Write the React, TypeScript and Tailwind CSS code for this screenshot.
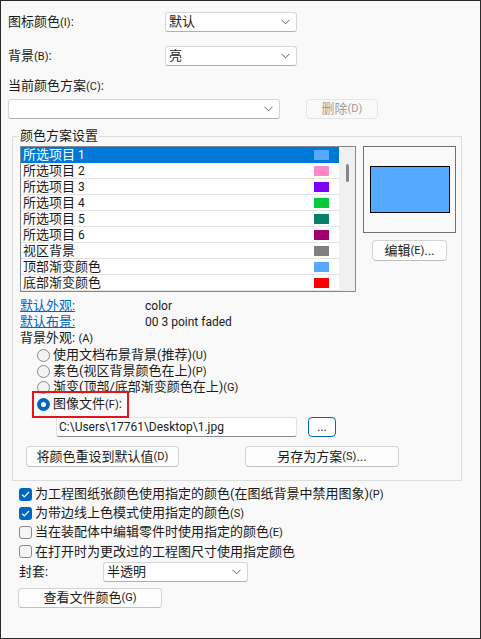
import React from "react";

const items = [
  { name: "所选项目", n: "1", color: "#55aaff" },
  { name: "所选项目", n: "2", color: "#ff88c8" },
  { name: "所选项目", n: "3", color: "#8000ff" },
  { name: "所选项目", n: "4", color: "#00cc3c" },
  { name: "所选项目", n: "5", color: "#0a7f68" },
  { name: "所选项目", n: "6", color: "#a0006e" },
  { name: "视区背景", n: "", color: "#808080" },
  { name: "顶部渐变颜色", n: "", color: "#55aaff" },
  { name: "底部渐变颜色", n: "", color: "#ff0000" },
];

const Key = ({ k }: { k: string }) => <span className="text-[11px]">({k})</span>;

const Chevron = () => (
  <svg width="9" height="6" viewBox="0 0 9 6" className="shrink-0">
    <path d="M0.5 0.8 L4.5 4.8 L8.5 0.8" fill="none" stroke="#5f5f5f" strokeWidth="1" />
  </svg>
);

const Select = ({ value, className }: { value?: string; className: string }) => (
  <div
    className={
      "flex items-center justify-between bg-white border border-[#d6d6d6] border-b-[#b0b0b0] rounded-[3px] pl-[3px] pr-[6px] " +
      className
    }
  >
    <span>{value}</span>
    <Chevron />
  </div>
);

const Button = ({ children, className }: { children: React.ReactNode; className: string }) => (
  <div
    className={
      "flex items-center justify-center bg-[#fdfdfd] border border-[#d3d3d3] border-b-[#c0c0c0] rounded-[4px] " + className
    }
  >
    {children}
  </div>
);

const Radio = ({ checked, children }: { checked?: boolean; children: React.ReactNode }) => (
  <div className="flex items-center h-[16px] pl-[17px]">
    {checked ? (
      <div className="w-[13px] h-[13px] shrink-0 rounded-full bg-[#0067c0] flex items-center justify-center">
        <div className="w-[5px] h-[5px] rounded-full bg-white" />
      </div>
    ) : (
      <div className="w-[13px] h-[13px] shrink-0 rounded-full border border-[#8a8a8a] bg-[#f3f3f3]" />
    )}
    <span className="ml-[3px] whitespace-nowrap">{children}</span>
  </div>
);

const Check = ({ checked, children }: { checked?: boolean; children: React.ReactNode }) => (
  <div className="flex items-center h-[19px] pl-[11px]">
    {checked ? (
      <div className="w-[13px] h-[13px] shrink-0 rounded-[3px] bg-[#0067c0] flex items-center justify-center">
        <svg width="9" height="7" viewBox="0 0 9 7">
          <path d="M1 3.6 L3.3 5.8 L8 1" fill="none" stroke="white" strokeWidth="1.2" />
        </svg>
      </div>
    ) : (
      <div className="w-[13px] h-[13px] shrink-0 rounded-[3px] border border-[#8a8a8a] bg-[#f5f5f5]" />
    )}
    <span className="ml-[3px] whitespace-nowrap">{children}</span>
  </div>
);

export default function App() {
  return (
    <div className="w-[481px] h-[639px] border border-[#2a2a2a] bg-[#f9f9f9] text-[#1a1a1a] text-[13px] leading-[16px] font-['Roboto','Noto_Sans_CJK_SC',sans-serif] flex flex-col pl-[7px] pt-[11px] overflow-hidden">
      {/* top selectors */}
      <div className="flex items-center h-[20px]">
        <span className="w-[157px]">
          图标颜色<Key k="I" />:
        </span>
        <Select value="默认" className="w-[132px] h-[20px]" />
      </div>
      <div className="flex items-center h-[20px] mt-[14px]">
        <span className="w-[157px]">
          背景<Key k="B" />:
        </span>
        <Select value="亮" className="w-[132px] h-[20px]" />
      </div>
      <div className="mt-[12px] h-[16px]">
        当前颜色方案<Key k="C" />:
      </div>
      <div className="flex items-center mt-[5px] h-[20px]">
        <Select className="w-[272px] h-[20px]" />
        <div className="ml-[26px] w-[72px] h-[20px] flex items-center justify-center border border-[#e5e5e5] rounded-[4px] bg-[#f9f9f9] text-[#9d9d9d]">
          删除<Key k="D" />
        </div>
      </div>

      {/* group box */}
      <div className="relative mt-[17px] ml-[4px] w-[450px] h-[345px] shrink-0 border border-[#dcdcdc] pl-[7px] pt-[9px] flex flex-col">
        <span className="absolute left-[6px] top-[-9px] px-[1px] bg-[#f9f9f9]">颜色方案设置</span>

        <div className="flex items-start">
          <div className="w-[336px] h-[146px] border border-[#828790] bg-white flex">
            <div className="w-[318px] flex flex-col">
              {items.map((it, i) => (
                <div
                  key={i}
                  className={
                    "h-[16px] shrink-0 flex items-center justify-between pl-[2px] pr-[10px] border-b " +
                    (i === 0 ? "bg-[#0078d7] text-white border-[#0078d7]" : "border-[#e3e3e3]")
                  }
                >
                  <span>
                    {it.name}
                    {it.n && <span className="text-[12px]"> {it.n}</span>}
                  </span>
                  <div className="w-[15px] h-[10px]" style={{ backgroundColor: it.color }} />
                </div>
              ))}
            </div>
            <div className="w-[16px] bg-[#f0f0f0] pt-[17px] flex justify-center">
              <div className="w-[3px] h-[18px] ml-[1px] rounded-full bg-[#858585]" />
            </div>
          </div>
          <div className="ml-[7px] w-[93px] flex flex-col items-center">
            <div className="w-[93px] h-[87px] border border-[#707070] flex items-center justify-center">
              <div className="w-[80px] h-[47px] bg-[#55aaff] border border-black" />
            </div>
            <Button className="mt-[7px] w-[75px] h-[21px]">
              编辑<Key k="E" />...
            </Button>
          </div>
        </div>

        <div className="mt-[6px] flex h-[16px]">
          <span className="w-[125px] text-[#0066cc] underline">默认外观:</span>
          <span className="text-[12px]">color</span>
        </div>
        <div className="flex h-[16px]">
          <span className="w-[125px] text-[#0066cc] underline">默认布景:</span>
          <span className="text-[12px]">00 3 point faded</span>
        </div>
        <div className="h-[16px]">
          背景外观: <Key k="A" />
        </div>
        <div className="mt-[1px]">
          <Radio>
            使用文档布景背景(推荐)<Key k="U" />
          </Radio>
          <Radio>
            素色(视区背景颜色在上)<Key k="P" />
          </Radio>
          <Radio>
            渐变(顶部/底部渐变颜色在上)<Key k="G" />
          </Radio>
          <div className="mt-[1px]">
            <Radio checked>
              图像文件<Key k="F" />:
            </Radio>
          </div>
        </div>

        <div className="flex items-center mt-[5px] h-[20px]">
          <div className="ml-[36px] w-[241px] h-[20px] bg-white border border-[#e2e2e2] border-b-[#8a8a8a] rounded-[3px] pl-[2px] flex items-center text-[12px]">
            C:\Users\17761\Desktop\1.jpg
          </div>
          <div className="ml-[11px] w-[28px] h-[20px] flex items-center justify-center border border-[#0067c0] rounded-[4px] bg-[#fdfdfd] text-[12px]">
            ...
          </div>
        </div>

        <div className="flex items-center mt-[9px] h-[21px]">
          <Button className="ml-[6px] w-[153px] h-[21px]">
            将颜色重设到默认值<Key k="D" />
          </Button>
          <Button className="ml-[66px] w-[154px] h-[21px]">
            另存为方案<Key k="S" />...
          </Button>
        </div>

        {/* annotation highlight */}
        <div className="absolute left-[19px] top-[254px] w-[97px] h-[27px] border-2 border-[#e0161b]" />
      </div>

      {/* checkboxes */}
      <div className="mt-[4px] flex flex-col">
        <Check checked>
          为工程图纸张颜色使用指定的颜色(在图纸背景中禁用图象)<Key k="P" />
        </Check>
        <Check checked>
          为带边线上色模式使用指定的颜色<Key k="S" />
        </Check>
        <Check>
          当在装配体中编辑零件时使用指定的颜色<Key k="E" />
        </Check>
        <Check>在打开时为更改过的工程图尺寸使用指定颜色</Check>
      </div>

      <div className="flex items-center mt-[1px] h-[19px]">
        <span className="ml-[11px] w-[84px]">封套:</span>
        <Select value="半透明" className="w-[145px] h-[20px]" />
      </div>

      <Button className="mt-[7px] ml-[10px] w-[144px] h-[20px]">
        查看文件颜色<Key k="G" />
      </Button>
    </div>
  );
}
